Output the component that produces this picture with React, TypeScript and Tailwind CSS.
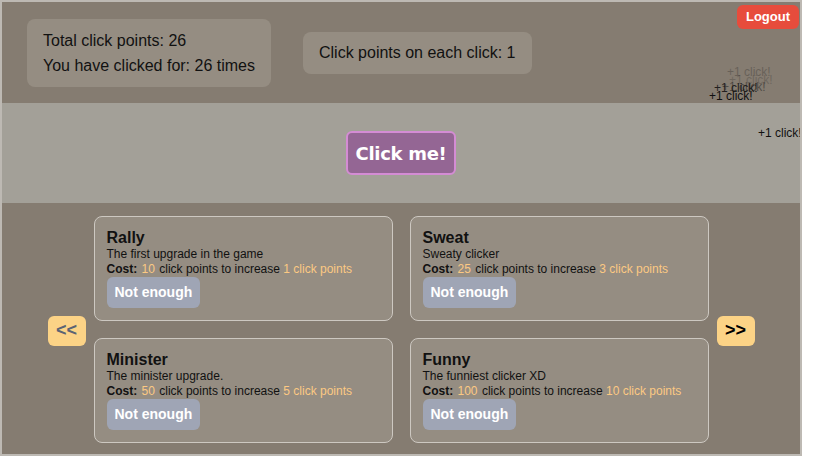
const upgrades = [
  { name: "Rally", desc: "The first upgrade in the game", cost: 10, gain: 1 },
  { name: "Sweat", desc: "Sweaty clicker", cost: 25, gain: 3 },
  { name: "Minister", desc: "The minister upgrade.", cost: 50, gain: 5 },
  { name: "Funny", desc: "The funniest clicker XD", cost: 100, gain: 10 },
];

// floating "+1 click!" popups
const popups = [
  { left: 725, top: 63, opacity: 0.25 },
  { left: 727, top: 71, opacity: 0.2 },
  { left: 720, top: 78, opacity: 0.45 },
  { left: 712, top: 79, opacity: 0.85 },
  { left: 707, top: 87, opacity: 1 },
  { left: 756, top: 124, opacity: 1 },
];

const UpgradeCard = ({ u }: { u: (typeof upgrades)[number] }) => (
  <div className="w-[299px] h-[105px] rounded-lg border border-[#cdc8c1] bg-[#958d82] px-3 pt-3 text-[#111]">
    <h3 className="text-[16px] leading-[18px] font-bold">{u.name}</h3>
    <p className="text-[12px] leading-[15px]">{u.desc}</p>
    <p className="text-[12px] leading-[15px]">
      <span className="font-bold">Cost:</span>{" "}
      <span className="text-[#fcc982] mx-[1px]">{u.cost}</span> click points to increase{" "}
      <span className="text-[#fcc982]">{u.gain} click points</span>
    </p>
    <button className="h-[31px] px-2 rounded-md bg-[#9fa5b5] text-white text-[14px] font-bold">
      Not enough
    </button>
  </div>
);

export default function App() {
  return (
    <div className="w-[802px] h-[456px] border-2 border-[#bdb9b3] bg-[#857c71] relative overflow-hidden flex flex-col font-['Liberation_Sans',Arial,sans-serif]">
      <button className="absolute top-[3px] right-[1px] h-[24px] px-[9px] rounded-md bg-[#e74c3c] text-white text-[13px] font-bold z-10">
        Logout
      </button>

      {popups.map((p, i) => (
        <span
          key={i}
          className="absolute text-[12px] leading-[14px] text-[#111] whitespace-nowrap"
          style={{ left: p.left, top: p.top, opacity: p.opacity }}
        >
          +1 click!
        </span>
      ))}

      {/* stats */}
      <div className="h-[101px] flex items-center pl-[25px] gap-[32px] text-[16px] text-[#111]">
        <div className="rounded-lg bg-[#958d82] px-4 py-[9px] leading-[25px]">
          <p>Total click points: 26</p>
          <p>You have clicked for: 26 times</p>
        </div>
        <div className="rounded-lg bg-[#958d82] px-4 py-[9px] leading-[24px]">
          Click points on each click: 1
        </div>
      </div>

      {/* clicker */}
      <div className="h-[100px] bg-[#a3a098] flex items-center justify-center">
        <button className="h-[44px] w-[110px] rounded-md border-2 border-[#d48cd4] bg-[#946694] text-white text-[18px] font-bold font-['DejaVu_Sans',sans-serif] tracking-[-0.3px]">
          Click me!
        </button>
      </div>

      {/* upgrades */}
      <div className="flex-1 flex items-center justify-center gap-2 pt-[1px]">
        <button className="w-[38px] h-[30px] rounded-md bg-[#fcd386] text-[#5b6374] text-[18px] font-bold mt-[3px]">
          &lt;&lt;
        </button>
        <div className="grid grid-cols-2 gap-[17px]">
          {upgrades.map((u) => (
            <UpgradeCard key={u.name} u={u} />
          ))}
        </div>
        <button className="w-[38px] h-[30px] rounded-md bg-[#fcd386] text-black text-[18px] font-bold mt-[3px]">
          &gt;&gt;
        </button>
      </div>
    </div>
  );
}
